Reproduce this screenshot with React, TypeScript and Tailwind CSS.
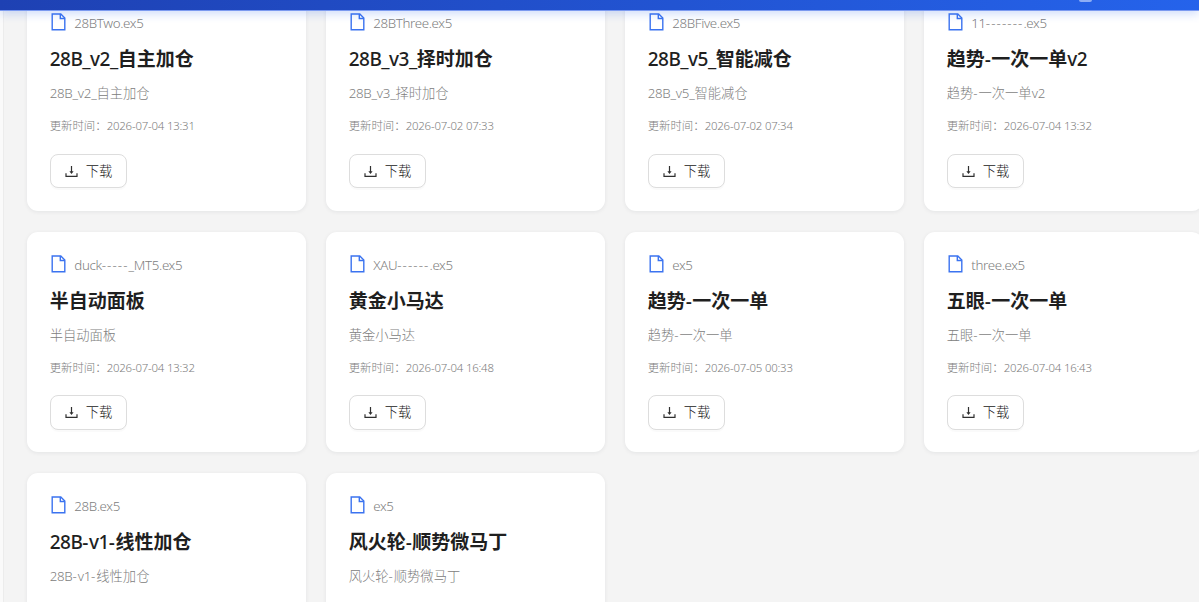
import React from 'react';

interface Strategy {
  file: string;
  title: string;
  updated?: string;
}

const STRATEGIES: Strategy[] = [
  { file: '28BTwo.ex5', title: '28B_v2_自主加仓', updated: '2026-07-04 13:31' },
  { file: '28BThree.ex5', title: '28B_v3_择时加仓', updated: '2026-07-02 07:33' },
  { file: '28BFive.ex5', title: '28B_v5_智能减仓', updated: '2026-07-02 07:34' },
  { file: '11-------.ex5', title: '趋势-一次一单v2', updated: '2026-07-04 13:32' },
  { file: 'duck-----_MT5.ex5', title: '半自动面板', updated: '2026-07-04 13:32' },
  { file: 'XAU------.ex5', title: '黄金小马达', updated: '2026-07-04 16:48' },
  { file: 'ex5', title: '趋势-一次一单', updated: '2026-07-05 00:33' },
  { file: 'three.ex5', title: '五眼-一次一单', updated: '2026-07-04 16:43' },
  { file: '28B.ex5', title: '28B-v1-线性加仓' },
  { file: 'ex5', title: '风火轮-顺势微马丁' },
];

// Latin runs get their own weight and tracking next to the Chinese glyphs,
// hyphens are spaced a bit wider than the letters
function MixedText({ text, latinClass, hyphenClass }: { text: string; latinClass: string; hyphenClass: string }) {
  const runs = text.match(/-+|[\x00-\x2c\x2e-\x7f]+|[^\x00-\x7f]+/g) ?? [];
  return (
    <>
      {runs.map((run, i) => {
        const code = run.charCodeAt(0);
        const cls = code === 45 ? hyphenClass : code < 128 ? latinClass : undefined;
        return (
          <span key={i} className={cls}>
            {run}
          </span>
        );
      })}
    </>
  );
}

function FileIcon() {
  return (
    <svg width="15" height="18" viewBox="0 0 15 18" fill="none" stroke="#3b73f0" strokeWidth="1.4" className="ml-px shrink-0">
      <path d="M1.2 1h8.6l4 4v11.8H1.2z" />
      <path d="M9.3 1v4.5h4.5" />
    </svg>
  );
}

function DownloadIcon() {
  return (
    <svg width="13" height="13" viewBox="0 0 13 13" fill="none" stroke="#303030" strokeWidth="1.2" className="shrink-0">
      <path d="M6.5 1v7" />
      <path d="M4.4 6.2h4.2L6.5 8.9z" fill="#303030" stroke="none" />
      <path d="M1 8.3v3.1h11V8.3" />
    </svg>
  );
}

function StrategyCard({ item }: { item: Strategy }) {
  return (
    <div className="h-[220.6px] rounded-[11px] bg-white px-[23px] pt-[21px] shadow-[0_1px_4px_rgba(15,23,42,0.07)]">
      <div className="flex h-[22px] items-center gap-[8.6px]">
        <FileIcon />
        <span className="mt-[2px] text-[13.3px] leading-5 font-light text-[#808080]">
          <MixedText text={item.file} latinClass="tracking-[-0.35px]" hyphenClass="tracking-[1.1px]" />
        </span>
      </div>
      <h3 className="mt-[12px] text-[19px] leading-[28px] font-bold text-[#1f1f1f]">
        <MixedText text={item.title} latinClass="font-medium tracking-[-0.5px]" hyphenClass="font-medium tracking-[0.5px]" />
      </h3>
      <p className="mt-[10px] text-[13.3px] leading-5 font-light text-[#808080]">
        <MixedText text={item.title} latinClass="tracking-[-0.25px]" hyphenClass="tracking-[0.9px]" />
      </p>
      {item.updated && (
        <>
          <p className="mt-[15px] text-[11.4px] leading-4 font-light text-[#7c7c7c]">
            更新时间：<span className="tracking-[-0.19px]">{item.updated}</span>
          </p>
          <button className="mt-[19.7px] flex h-[34.6px] w-[77px] items-center justify-center gap-[8px] rounded-[8px] border border-[#dddddd] bg-white pl-[0.8px] text-[13.3px] font-light text-[#181818] shadow-[0_2px_0_rgba(0,0,0,0.02)]">
            <DownloadIcon />
            <span className="mt-[1.4px]">下载</span>
          </button>
        </>
      )}
    </div>
  );
}

export default function App() {
  return (
    <div className="flex h-[602px] w-[1199px] flex-col overflow-hidden bg-[#f4f4f4] font-['Noto_Sans','Noto_Sans_CJK_SC',sans-serif]">
      <header className="relative z-10 flex h-[11px] shrink-0 items-start justify-end overflow-visible border-b border-[#7b9af0] bg-linear-to-r from-[#1e41b3] to-[#2563eb] shadow-[0_3px_10px_rgba(37,99,235,0.22)]">
        <div className="mr-[107px] h-[1.5px] w-[13px] rounded-b-full bg-[#8eaef5]" />
      </header>
      <div className="flex min-h-0 flex-1">
        <aside className="w-[3.5px] shrink-0 border-r border-[#ececec] bg-[#fafafa]" />
        <main className="min-w-0 flex-1 overflow-hidden pl-[23.2px]">
          <div className="-mt-[20.8px] grid grid-cols-[repeat(4,279px)] gap-x-[20px] gap-y-[20.9px]">
            {STRATEGIES.map((item) => (
              <StrategyCard key={item.title} item={item} />
            ))}
          </div>
        </main>
      </div>
    </div>
  );
}
